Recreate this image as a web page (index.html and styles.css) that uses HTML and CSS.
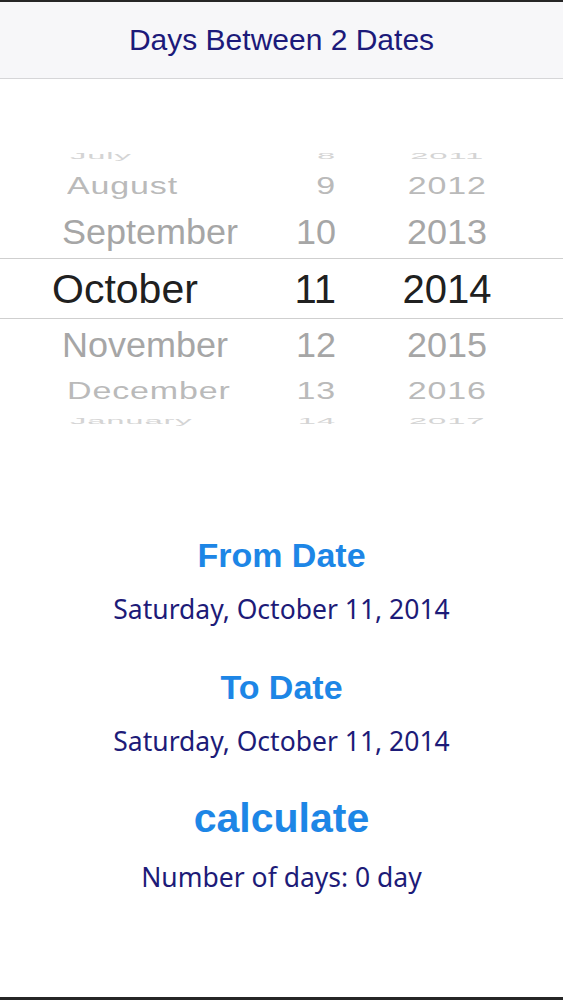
FILE: index.html
```html
<!doctype html>
<html>
<head>
  <meta charset="utf-8">
  <title>Days Between 2 Dates</title>
  <link rel="stylesheet" href="styles.css">
</head>
<body>
  <div class="screen">
    <header class="nav-bar">
      <h1>Days Between 2 Dates</h1>
    </header>

    <!-- Date wheel -->
    <div class="picker">
      <div class="wheel">
        <div class="row far2">
          <span class="month">July</span><span class="day">8</span><span class="year">2011</span>
        </div>
        <div class="row far">
          <span class="month">August</span><span class="day">9</span><span class="year">2012</span>
        </div>
        <div class="row near">
          <span class="month">September</span><span class="day">10</span><span class="year">2013</span>
        </div>
        <div class="row selected">
          <span class="month">October</span><span class="day">11</span><span class="year">2014</span>
        </div>
        <div class="row near">
          <span class="month">November</span><span class="day">12</span><span class="year">2015</span>
        </div>
        <div class="row far">
          <span class="month">December</span><span class="day">13</span><span class="year">2016</span>
        </div>
        <div class="row far2">
          <span class="month">January</span><span class="day">14</span><span class="year">2017</span>
        </div>
      </div>
    </div>

    <!-- Results -->
    <div class="results">
      <div class="date-group">
        <button class="link-button">From Date</button>
        <div class="date-value">Saturday, October 11, 2014</div>
      </div>
      <div class="date-group">
        <button class="link-button">To Date</button>
        <div class="date-value">Saturday, October 11, 2014</div>
      </div>
      <div class="date-group last">
        <button class="link-button big">calculate</button>
        <div class="date-value">Number of days: 0 day</div>
      </div>
    </div>
  </div>
</body>
</html>
```

FILE: styles.css
```css
body {
  margin: 0;
  background-color: #ffffff;
  font-family: "Liberation Sans", Arial, sans-serif;
}
.screen {
  height: 1000px;
  box-sizing: border-box;
  border-top: 2px solid #262626;
  border-bottom: 3px solid #262626;
  display: flex;
  flex-direction: column;
  overflow: hidden;
}

/* Top bar */
.nav-bar {
  height: 77px;
  box-sizing: border-box;
  background-color: #f7f7f9;
  border-bottom: 1px solid #d6d6d8;
  display: flex;
  align-items: center;
  justify-content: center;
}
.nav-bar h1 {
  margin: 0;
  font-size: 30px;
  font-weight: normal;
  color: #1c1a7a;
}

/* Picker wheel */
.picker {
  height: 421px;
  padding-top: 67px;
  box-sizing: border-box;
}
.row {
  display: grid;
  grid-template-columns: 270px 66px 222px;
  font-size: 40px;
  white-space: nowrap;
}
.row span {
  display: block;
}
.month {
  padding-left: 52px;
  transform-origin: 152px 50%;
}
.day {
  text-align: right;
  transform-origin: 100% 50%;
}
.year {
  text-align: center;
  padding-right: 2px;
  transform-origin: 50% 50%;
  margin-left: 12px;
  width: 198px;
}
.row.selected {
  height: 61px;
  box-sizing: border-box;
  border-top: 1px solid #cfcfcf;
  border-bottom: 1px solid #cfcfcf;
  color: #202020;
}
.row.selected span {
  line-height: 61px;
}
.row.selected .month {
  font-size: 41px;
}
.row.near {
  height: 52px;
  line-height: 52px;
  color: #a6a6a6;
}
.row.near span {
  transform: scale(0.9, 0.86);
}
.row.far {
  height: 40px;
  line-height: 40px;
  color: #bababa;
  letter-spacing: 1px;
}
.row.far span {
  transform: scale(0.85, 0.6);
}
.row.far2 {
  height: 20px;
  line-height: 20px;
  color: #d4d4d4;
  letter-spacing: 1px;
}
.row.far2 span {
  transform: scale(0.82, 0.24);
}

/* Results */
.results {
  display: flex;
  flex-direction: column;
  align-items: center;
  padding-top: 35px;
}
.date-group {
  display: flex;
  flex-direction: column;
  align-items: center;
  margin-bottom: 42px;
}
.link-button {
  background: none;
  border: none;
  padding: 0;
  font-family: "Liberation Sans", Arial, sans-serif;
  font-size: 34px;
  font-weight: bold;
  line-height: 40px;
  color: #1d86e6;
  cursor: pointer;
}
.link-button.big {
  font-size: 41px;
  line-height: 38px;
}
.date-value {
  margin-top: 18px;
  font-family: "Noto Sans", sans-serif;
  font-size: 26.5px;
  line-height: 32px;
  color: #1d1b78;
}
.date-group.last .date-value {
  margin-top: 24px;
}
```
